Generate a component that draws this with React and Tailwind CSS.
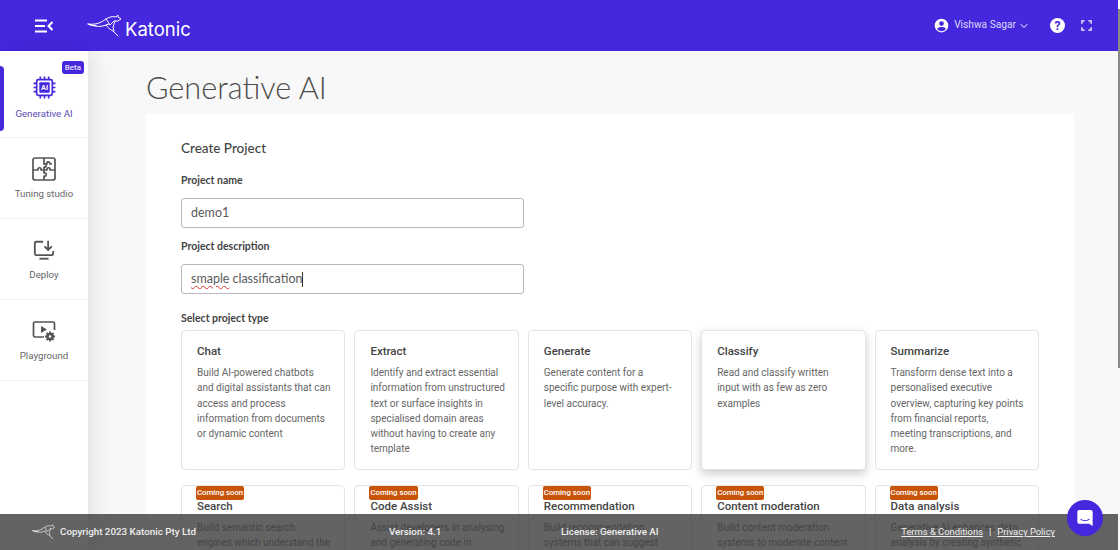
import { ChevronDown } from "lucide-react";

const ROW_ONE = [
  {
    title: "Chat",
    text: "Build AI-powered chatbots and digital assistants that can access and process information from documents or dynamic content",
  },
  {
    title: "Extract",
    text: "Identify and extract essential information from unstructured text or surface insights in specialised domain areas without having to create any template",
  },
  {
    title: "Generate",
    text: "Generate content for a specific purpose with expert-level accuracy.",
  },
  {
    title: "Classify",
    text: "Read and classify written input with as few as zero examples",
    raised: true,
  },
  {
    title: "Summarize",
    text: "Transform dense text into a personalised executive overview, capturing key points from financial reports, meeting transcriptions, and more.",
  },
];

const ROW_TWO = [
  { title: "Search", text: "Build semantic search engines which understand the" },
  { title: "Code Assist", text: "Assist developers in analysing and generating code in" },
  { title: "Recommendation", text: "Build recommendation systems that can suggest" },
  { title: "Content moderation", text: "Build content moderation systems to moderate content" },
  { title: "Data analysis", text: "Generative AI enhances data analysis by creating synthetic" },
];

function KangarooLogo({ className }) {
  return (
    <svg viewBox="0 0 36 24" fill="none" stroke="currentColor" strokeWidth="1" strokeLinecap="round" strokeLinejoin="round" className={className}>
      <path d="M1 10C8 11 14 9 19 5c3-2 7-3 10-2l2-2v2l3 2-3 2h-3" />
      <path d="M1 10c7 3 13 3 18 1 2 3 5 5 7 6l5 5" />
      <path d="M19 5l4 6 4-4M28 7l-2 6 1 4" />
      <path d="M19 11l3-1M3 11l6 .5" />
    </svg>
  );
}

function ChipIcon() {
  return (
    <svg viewBox="0 0 24 24" className="h-[25px] w-[25px] text-[#4527dd]" fill="none" stroke="currentColor">
      <rect x="4.5" y="4.5" width="15" height="15" rx="1.5" strokeWidth="1.6" />
      <rect x="7" y="7" width="10" height="10" rx="1" fill="currentColor" stroke="none" />
      <path d="M8 1.5v3M12 1.5v3M16 1.5v3M8 19.5v3M12 19.5v3M16 19.5v3M1.5 8h3M1.5 12h3M1.5 16h3M19.5 8h3M19.5 12h3M19.5 16h3" strokeWidth="1.6" />
      <text x="12" y="14.6" textAnchor="middle" fontSize="7" fontWeight="700" fill="#fff" stroke="none" fontFamily="Roboto, sans-serif">AI</text>
    </svg>
  );
}

function PuzzleIcon() {
  return (
    <svg viewBox="0 0 24 24" className="h-[24px] w-[24px] text-[#555]" fill="none" stroke="currentColor" strokeWidth="1.7" strokeLinejoin="round">
      <rect x="1" y="1" width="22" height="22" rx="2" />
      <path d="M1 13h5c-1-3 4-3 3 0h3v-3c3 1 3-4 0-3V1" />
      <path d="M12 13v3c3-1 3 4 0 3v4M12 13h3c-1-3 4-3 3 0h5" />
      <path d="M12 7h3c-1-2.5 3-3 3 0h2" />
    </svg>
  );
}

function DeployIcon() {
  return (
    <svg viewBox="0 0 24 24" className="my-px h-[22px] w-[22px] text-[#555]" fill="none" stroke="currentColor" strokeWidth="2">
      <path d="M11 3H3.5A1.5 1.5 0 0 0 2 4.5V16a1.5 1.5 0 0 0 1.5 1.5h17A1.5 1.5 0 0 0 22 16v-3" />
      <path d="M7 21.5h10" />
      <path d="M16.5 2v9M12.5 8l4 4 4-4" />
    </svg>
  );
}

function PlaygroundIcon() {
  return (
    <svg viewBox="0 0 24 24" className="h-[24px] w-[24px] text-[#555]" fill="none" stroke="currentColor" strokeWidth="1.7">
      <path d="M12 18H3a1.5 1.5 0 0 1-1.5-1.5v-12A1.5 1.5 0 0 1 3 3h18a1.5 1.5 0 0 1 1.5 1.5V11" />
      <path d="M9 7l6 3.5-6 3.5z" fill="currentColor" stroke="none" />
      <circle cx="18" cy="17.5" r="2.5" strokeWidth="2.5" />
      <path d="M18 12.5v2M18 20.5v2M13 17.5h2M21 17.5h2M14.5 14l1.4 1.4M20.1 19.6l1.4 1.4M14.5 21l1.4-1.4M20.1 15.4l1.4-1.4" strokeWidth="2" />
    </svg>
  );
}

function SideItem({ icon, label, active, beta }) {
  return (
    <div className={`relative flex flex-col items-center border-b border-[#f0f0f0] ${active ? "h-[87px] pt-[24px]" : "h-[81px] pt-[19px]"}`}>
      {active ? <div className="absolute left-0 top-[15px] h-[65px] w-[4px] rounded-r-sm bg-[#4527dd]" /> : null}
      {beta ? (
        <span className="absolute right-[4px] top-[10px] rounded-[3px] bg-[#4527dd] px-[3px] py-[2px] text-[8px] font-medium leading-[9px] text-[#e5e1fa]">
          Beta
        </span>
      ) : null}
      {icon}
      <span className={`text-[9.7px] leading-[16px] ${active ? "mt-[6px] text-[#5a4bb5]" : "mt-[5px] text-[#666]"}`}>{label}</span>
    </div>
  );
}

function ProjectCard({ title, text, raised, soon }) {
  return (
    <div
      className={`relative h-[140px] rounded-[4px] border border-[#e4e4e4] bg-white pl-[15px] pr-[12px] pt-[12px] ${raised ? "shadow-[0_4px_10px_rgba(0,0,0,0.2)]" : ""}`}
    >
      {soon ? (
        <span className="absolute left-[14px] top-0 rounded-[2px] bg-[#c8540a] px-[1px] py-[2px] text-[7.8px] font-medium leading-[10px] text-white">
          Coming soon
        </span>
      ) : null}
      <h3 className="text-[11.5px] font-medium leading-[16px] text-[#444]">{title}</h3>
      <p className="mt-[6px] text-[10px] leading-[15.25px] text-[#666]">{text}</p>
    </div>
  );
}

function Field({ label, value, typed }) {
  return (
    <div className="mb-[11px] w-[343px]">
      <label className="block text-[10.5px] font-bold leading-[14px] text-[#444]">{label}</label>
      <div className="mt-[11px] flex h-[30px] items-center rounded-[3px] border border-[#b9b7c4] px-[9px] text-[12.5px] text-[#5a5a5a]">
        {typed ? (
          <>
            <span className="underline decoration-[#d33] decoration-wavy decoration-1 underline-offset-2">smaple</span>
            <span className="ml-[3px]">classification</span>
            <span className="h-[15px] w-px bg-[#333]" />
          </>
        ) : (
          value
        )}
      </div>
    </div>
  );
}

export default function App() {
  return (
    <div className="relative flex h-[550px] w-[1120px] flex-col overflow-hidden bg-[#f8f8f8] font-['Roboto',sans-serif]">
      <header className="flex h-[51px] shrink-0 items-center bg-[#4527dd] text-white">
        <svg viewBox="0 0 18 14" className="ml-[35px] h-[14px] w-[18px]" fill="none" stroke="currentColor" strokeWidth="2">
          <path d="M0 1.5h12M0 7h10M0 12.5h12M17.5 3l-4 4 4 4" />
        </svg>
        <KangarooLogo className="ml-[34px] h-[24px] w-[36px]" />
        <span className="ml-[2px] mt-[7px] font-['Inter',sans-serif] text-[18.5px] leading-none">Katonic</span>
        <div className="ml-auto flex items-center">
          <svg viewBox="0 0 24 24" className="h-[15px] w-[15px]" fill="currentColor">
            <path d="M12 1a11 11 0 1 0 0 22 11 11 0 0 0 0-22zm0 4a3.8 3.8 0 1 1 0 7.6A3.8 3.8 0 0 1 12 5zm0 16a8.8 8.8 0 0 1-7-3.5c.6-2 4-3 7-3s6.4 1 7 3A8.8 8.8 0 0 1 12 21z" />
          </svg>
          <span className="ml-[5px] text-[10.2px] leading-none text-[#ded9f8]">Vishwa Sagar</span>
          <ChevronDown className="ml-[2px] h-[12px] w-[12px]" strokeWidth={2} />
          <div className="ml-[20px] flex h-[15px] w-[15px] items-center justify-center rounded-full bg-white text-[12px] font-bold leading-none text-[#4527dd]">?</div>
          <svg viewBox="0 0 12 12" className="ml-[16px] mr-[28px] h-[11px] w-[11px]" fill="none" stroke="currentColor" strokeWidth="1.4">
            <path d="M1 4V1h3M8 1h3v3M11 8v3H8M4 11H1V8" />
          </svg>
        </div>
      </header>

      <div className="flex min-h-0 flex-1">
        <aside className="z-10 w-[88px] shrink-0 bg-white shadow-[4px_0_20px_rgba(0,0,0,0.1)]">
          <SideItem icon={<ChipIcon />} label="Generative AI" active beta />
          <SideItem icon={<PuzzleIcon />} label="Tuning studio" />
          <SideItem icon={<DeployIcon />} label="Deploy" />
          <SideItem icon={<PlaygroundIcon />} label="Playground" />
        </aside>

        <main className="min-w-0 flex-1 overflow-hidden pl-[58px] pr-[46px]">
          <h1 className="mt-[17px] font-['Lato',sans-serif] text-[30.7px] font-light leading-[40px] text-[#4d4d4d]">
            Generative AI
          </h1>
          <section className="mt-[6px] bg-white px-[35px] pt-[24px] pb-[20px]">
            <h2 className="font-['Lato',sans-serif] text-[13.5px] font-medium leading-[20px] text-[#444]">Create Project</h2>
            <div className="mt-[15px] font-['Lato',sans-serif]">
              <Field label="Project name" value="demo1" />
              <Field label="Project description" typed />
              <div className="mt-[17px] text-[10.5px] font-bold leading-[14px] text-[#444]">Select project type</div>
            </div>
            <div className="mt-[5px] grid w-[858px] grid-cols-5 gap-x-[9px] gap-y-[15px]">
              {ROW_ONE.map((item) => (
                <ProjectCard key={item.title} {...item} />
              ))}
              {ROW_TWO.map((item) => (
                <ProjectCard key={item.title} {...item} soon />
              ))}
            </div>
          </section>
        </main>
      </div>

      <footer className="absolute bottom-0 left-0 z-20 flex h-[36px] w-[1118px] items-center bg-[rgba(60,60,60,0.8)] text-[9.8px] font-medium leading-none text-[#eee]">
        <KangarooLogo className="ml-[32px] h-[16px] w-[24px]" />
        <span className="ml-[4px] w-[329px]">Copyright 2023 Katonic Pty Ltd</span>
        <span className="w-[172px]">Version: 4.1</span>
        <span>License: Generative AI</span>
        <span className="ml-auto mr-[63px] text-[9.4px] font-normal">
          <span className="underline">Terms &amp; Conditions</span>
          <span className="mx-[6px]">|</span>
          <span className="underline">Privacy Policy</span>
        </span>
      </footer>

      <div className="absolute left-[1067px] top-[500px] z-30 flex h-[36px] w-[36px] items-center justify-center rounded-full bg-[#4527dd]">
        <svg viewBox="0 0 20 20" className="h-[18px] w-[18px]">
          <path d="M3.5 1h13a2 2 0 0 1 2 2v16l-4-2.5h-11a2 2 0 0 1-2-2V3a2 2 0 0 1 2-2z" fill="#fff" />
          <path d="M5.5 11.5c2.500 2 6.500 2 9 0" fill="none" stroke="#4527dd" strokeWidth="1.2" strokeLinecap="round" />
        </svg>
      </div>

      <div className="absolute right-0 top-0 z-40 h-[368px] w-[2px] border-t-[9px] border-white bg-[#8a8a8a]" />
    </div>
  );
}
